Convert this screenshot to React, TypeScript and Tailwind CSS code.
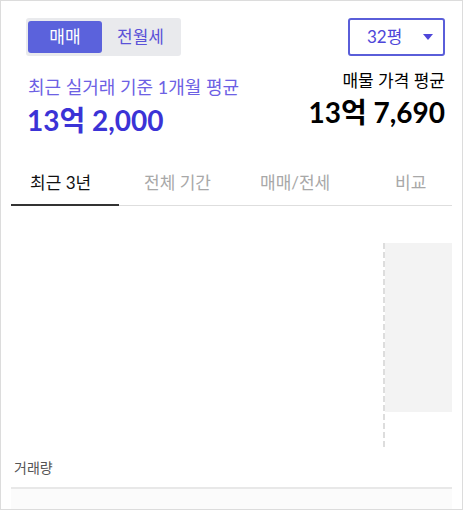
const tabs = [
  { label: "최근 3년", w: "w-[108px]", pl: "pl-[19px]", active: true },
  { label: "전체 기간", w: "w-[116px]", pl: "pl-[25px]", active: false },
  { label: "매매/전세", w: "w-[115px]", pl: "pl-[25px]", active: false },
  { label: "비교", w: "w-[102px]", pl: "pl-[45px]", active: false },
];

export default function App() {
  return (
    <div className="w-[463px] h-[510px] border border-[#dcdcdc] bg-white flex flex-col font-['Lato','Noto_Sans_CJK_KR',sans-serif]">
      {/* header */}
      <div className="h-[151px] pt-[17px] pl-[25px] pr-[17px] flex justify-between">
        <div className="flex flex-col items-start">
          <div className="flex w-[155px] h-[38px] bg-[#e9eaed] rounded-[3px] pl-[2px] pt-[3px]">
            <button className="w-[74px] h-[32px] rounded-[3px] bg-[#5b62dc] text-white text-[17px] leading-[32px]">
              매매
            </button>
            <button className="w-[77px] h-[32px] text-[#5b52d8] text-[17px] leading-[32px]">
              전월세
            </button>
          </div>
          <p className="mt-[19px] pl-[2px] text-[18px] leading-[24px] text-[#6d61e4]">
            최근 실거래 기준 1개월 평균
          </p>
          <p className="mt-[5px] pl-[1px] text-[28px] leading-[32px] font-bold text-[#3b33d6]">
            13억 2,000
          </p>
        </div>
        <div className="flex flex-col items-end">
          <button className="w-[97px] h-[38px] border-2 border-[#5a5ed9] rounded-[3px] flex items-center justify-between pl-[17px] pr-[10px]">
            <span className="text-[17px] leading-[22px] text-[#4e46d9]">32평</span>
            <svg width="10" height="6" viewBox="0 0 10 6">
              <path d="M0 0H10L5 6Z" fill="#4e46d9" />
            </svg>
          </button>
          <p className="mt-[14px] text-[17px] leading-[22px] text-black">매물 가격 평균</p>
          <p className="mt-[4px] text-[28px] leading-[32px] font-bold text-black">13억 7,690</p>
        </div>
      </div>

      {/* tabs */}
      <div className="mx-[10px] flex border-b border-[#dedede]">
        {tabs.map((t) => (
          <button
            key={t.label}
            className={`${t.w} ${t.pl} h-[54px] -mb-px pt-[10px] text-left text-[17px] leading-[26px] self-start border-b-2 ${
              t.active ? "border-[#333333] text-[#111111]" : "border-transparent text-[#a8a8a8]"
            }`}
          >
            <span className="block">{t.label}</span>
          </button>
        ))}
      </div>

      {/* chart */}
      <div className="h-[252px] mx-[10px] flex pt-[37px]">
        <div className="w-[372px]" />
        <div className="w-[2px] h-[206px] bg-[repeating-linear-gradient(to_bottom,#dddddd_0px,#dddddd_6px,transparent_6px,transparent_9px)]" />
        <div className="w-[67px] h-[169px] bg-[#f3f3f3]" />
      </div>

      <p className="mx-[10px] pl-[3px] text-[14px] leading-[20px] text-[#555555]">거래량</p>
      <div className="mx-[10px] mt-[9px] h-[2px] bg-[#e8e8e8]" />
      <div className="mx-[10px] flex-1 bg-[#fbfbfb]" />
    </div>
  );
}
